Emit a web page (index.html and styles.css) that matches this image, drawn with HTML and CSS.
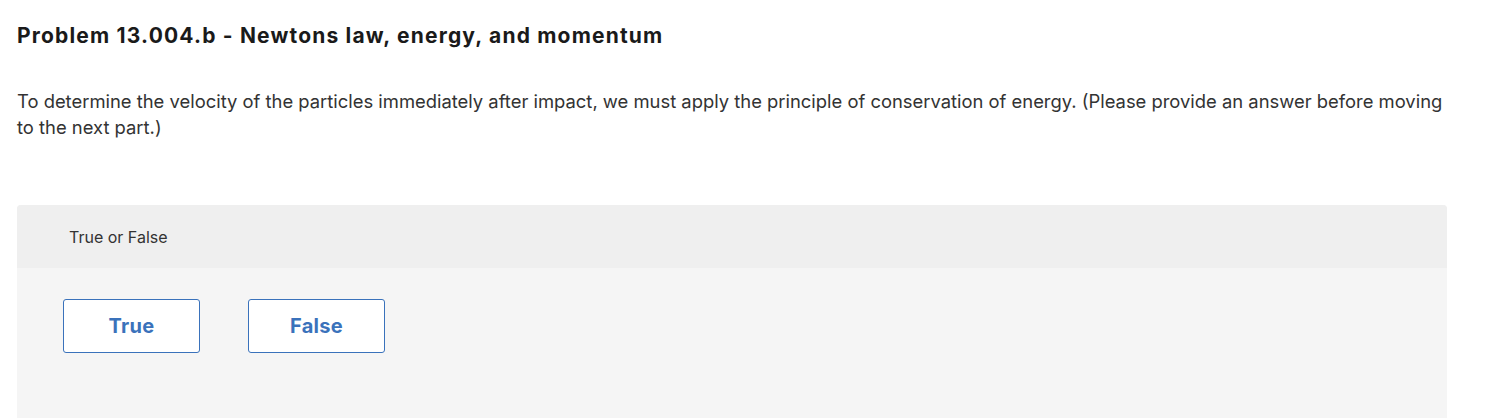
FILE: index.html
```html
<!DOCTYPE html>
<html lang="en">
<head>
<meta charset="utf-8">
<title>Problem 13.004.b</title>
<link rel="stylesheet" href="styles.css">
</head>
<body>
<main class="page">
  <h1 class="title">Problem 13.004.b - Newtons law, energy, and momentum</h1>
  <p class="prompt">To determine the velocity of the particles immediately after impact, we must apply the principle of conservation of energy. (Please provide an answer before moving to the next part.)</p>
  <section class="question">
    <div class="question-head">True or False</div>
    <div class="question-body">
      <button class="choice" type="button">True</button>
      <button class="choice" type="button">False</button>
    </div>
  </section>
</main>
</body>
</html>
```
FILE: styles.css
```css
html, body {
  margin: 0;
  padding: 0;
  background: #ffffff;
}
body {
  font-family: Inter, "Open Sans", Arial, sans-serif;
  color: #333333;
}
.page {
  padding: 0 38px 0 17px;
}
.title {
  margin: 0;
  padding-top: 22px;
  font-size: 21px;
  line-height: 28px;
  font-weight: 700;
  letter-spacing: 1.18px;
  color: #1a1a1a;
}
.prompt {
  margin: 0;
  padding-top: 38px;
  font-size: 18.4px;
  line-height: 26px;
  color: #333333;
}
.question {
  margin-top: 65px;
  border-radius: 4px 4px 0 0;
  overflow: hidden;
  background: #f5f5f5;
}
.question-head {
  background: #efefef;
  height: 63px;
  padding-left: 52px;
  display: flex;
  align-items: center;
  font-size: 16px;
  color: #333333;
}
.question-body {
  display: flex;
  gap: 48px;
  padding: 31px 46px 100px;
}
.choice {
  width: 137px;
  height: 54px;
  background: #ffffff;
  border: 1px solid #3a72bb;
  border-radius: 3px;
  font-family: inherit;
  font-size: 20px;
  font-weight: 700;
  letter-spacing: 0.3px;
  color: #3a72bb;
  cursor: pointer;
}
```
